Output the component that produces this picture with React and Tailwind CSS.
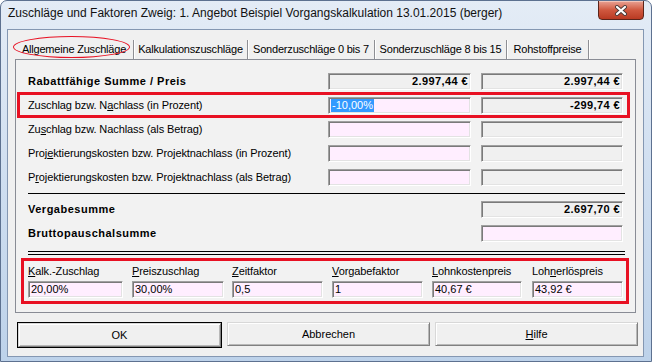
import clsx from "clsx";

const Field = ({ w, pink, value, bold, right, selected }) => (
  <div
    className={clsx(
      "h-[17px] shrink-0 border border-t-[#a0a0a0] border-l-[#a0a0a0] border-b-[#ffffff] border-r-[#ffffff] shadow-[inset_1px_1px_0_#7a7a7a,inset_-1px_-1px_0_#e3e3e3] flex items-center px-[2px] text-[11px] leading-[13px] text-black whitespace-nowrap",
      pink ? "bg-[#ffeeff]" : "bg-[#f0f0f0]",
      right ? "justify-end" : "justify-start",
      bold && "font-bold tracking-[0.4px]",
      w
    )}
  >
    {selected ? <span className="bg-[#3399ff] text-white px-px h-[13px]">{value}</span> : value}
  </div>
);

const U = ({ children }) => <span className="underline underline-offset-[1px]">{children}</span>;

const Row = ({ label, bold, a, b }) => (
  <div className="h-[24px] flex items-center">
    <div className={clsx("w-[300px] text-[11px] whitespace-nowrap", bold ? "font-bold tracking-[0.5px]" : "tracking-[-0.1px]")}>{label}</div>
    <div className="w-[143px]">{a}</div>
    <div className="w-[142px] ml-[10px]">{b}</div>
  </div>
);

const tabs = [
  { name: "Allgemeine Zuschläge", w: "w-[119px]", active: true },
  { name: "Kalkulationszuschläge", w: "w-[114px]" },
  { name: "Sonderzuschläge 0 bis 7", w: "w-[127px]" },
  { name: "Sonderzuschläge 8 bis 15", w: "w-[132px]" },
  { name: "Rohstoffpreise", w: "w-[82px]" },
];

const bottom = [
  { label: <><U>K</U>alk.-Zuschlag</>, value: "20,00%", w: "w-[95px]" },
  { label: <><U>P</U>reiszuschlag</>, value: "30,00%", w: "w-[92px]" },
  { label: <><U>Z</U>eitfaktor</>, value: "0,5", w: "w-[91px]" },
  { label: <><U>V</U>orgabefaktor</>, value: "1", w: "w-[91px]" },
  { label: <><U>L</U>ohnkostenpreis</>, value: "40,67 €", w: "w-[90px]" },
  { label: <>Loh<U>n</U>erlöspreis</>, value: "43,92 €", w: "w-[91px]" },
];

const btn =
  "w-[203px] h-[24px] bg-[#f0f0f0] border border-t-[#d8d8d8] border-l-[#d8d8d8] border-b-[#808080] border-r-[#808080] shadow-[inset_1px_1px_0_#ffffff,inset_-1px_-1px_0_#b8b8b8] text-[11px] text-black flex items-center justify-center";

export default function App() {
  return (
    <div className="w-[652px] h-[362px] relative overflow-hidden flex flex-col rounded-t-[7px] border border-[#5d7190] bg-gradient-to-b from-[#e4ecf6] via-[#cfdef0] to-[#bdd2ea] font-['Liberation_Sans',Arial,sans-serif] text-black select-none">
      {/* title bar */}
      <div className="h-[28px] shrink-0 relative">
        <div className="pl-[7px] pt-[5px] text-[12px] leading-[15px] whitespace-nowrap text-[#111]">
          Zuschläge und Faktoren Zweig: 1. Angebot Beispiel Vorgangskalkulation 13.01.2015 (berger)
        </div>
        <div className="absolute right-[7px] -top-px w-[46px] h-[20px] rounded-b-[4px] border border-[#5b241a] bg-gradient-to-b from-[#e8a294] via-[#d0583f] to-[#b93a22] shadow-[inset_0_1px_0_#f3c4b8] flex items-center justify-center">
          <svg width="14" height="11" viewBox="0 0 14 11">
            <path d="M3 2 L11 9 M11 2 L3 9" stroke="#4a3a38" strokeWidth="4" strokeLinecap="round" />
            <path d="M3 2 L11 9 M11 2 L3 9" stroke="#ffffff" strokeWidth="2.2" strokeLinecap="round" />
          </svg>
        </div>
      </div>

      {/* client area */}
      <div className="flex-1 ml-[6px] mr-[7px] mb-[4px] border border-[#8497b2] bg-[#f0f0f0] flex flex-col">
        {/* tab strip */}
        <div className="mt-[8px] ml-[7px] h-[21px] flex items-end">
          {tabs.map((t) => (
            <div
              key={t.name}
              className={clsx(
                "relative h-[19px] flex items-center justify-center text-[11px] tracking-[-0.2px] whitespace-nowrap border-r border-r-[#8e8f94] shadow-[1px_0_0_#ffffff]",
                t.w
              )}
            >
              {t.name}
              {t.active && (
                <div className="absolute -left-[2px] -top-[4px] w-[117px] h-[22px] rounded-[50%] border border-[#e81123]" />
              )}
            </div>
          ))}
        </div>

        {/* pane */}
        <div className="ml-[7px] mr-[7px] h-[254px] shrink-0 border border-[#898c95] bg-[#f2f2f2] pl-[12px] pr-[11px] pt-[9px] flex flex-col">
          <Row
            bold
            label="Rabattfähige Summe / Preis"
            a={<Field w="w-[143px]" value="2.997,44 €" bold right />}
            b={<Field w="w-[142px]" value="2.997,44 €" bold right />}
          />
          <div className="relative">
            <Row
              label={<>Zuschlag bzw. N<U>a</U>chlass (in Prozent)</>}
              a={<Field w="w-[143px]" pink value="-10,00%" selected />}
              b={<Field w="w-[142px]" value="-299,74 €" bold right />}
            />
            <div className="absolute -left-[11px] -right-[6px] -top-px -bottom-px border-[3px] border-[#e81123] pointer-events-none" />
          </div>
          <Row
            label={<>Zu<U>s</U>chlag bzw. Nachlass (als Betrag)</>}
            a={<Field w="w-[143px]" pink />}
            b={<Field w="w-[142px]" />}
          />
          <Row
            label={<>Proj<U>e</U>ktierungskosten bzw. Projektnachlass (in Prozent)</>}
            a={<Field w="w-[143px]" pink />}
            b={<Field w="w-[142px]" />}
          />
          <Row
            label={<>P<U>r</U>ojektierungskosten bzw. Projektnachlass (als Betrag)</>}
            a={<Field w="w-[143px]" pink />}
            b={<Field w="w-[142px]" />}
          />

          <div className="mt-[4px] h-px bg-black mr-[-1px]" />

          <div className="mt-[3px]">
            <Row bold label="Vergabesumme" a={null} b={<Field w="w-[142px]" value="2.697,70 €" bold right />} />
            <Row bold label="Bruttopauschalsumme" a={null} b={<Field w="w-[142px]" pink />} />
          </div>

          <div className="mt-[6px] h-px bg-black mr-[-1px]" />
          <div className="mt-[2px] h-px bg-black mr-[-1px]" />

          {/* bottom factors */}
          <div className="mt-[3px] -ml-[7px] -mr-[5px] border-[3px] border-[#e81123] pl-[4px] pt-[4px] pb-[3px] grid grid-cols-[104px_100px_100px_100px_100px_1fr]">
            {bottom.map((f, i) => (
              <div key={i} className="flex flex-col">
                <div className="h-[13px] leading-[13px] text-[11px] tracking-[-0.1px] whitespace-nowrap">{f.label}</div>
                <div className="mt-[3px]">
                  <Field w={f.w} pink value={f.value} />
                </div>
              </div>
            ))}
          </div>
        </div>

        {/* buttons */}
        <div className="mt-[9px] ml-[9px] flex gap-[5px]">
          <div className="border border-black">
            <div className={clsx(btn, "w-[201px] h-[22px]")}>OK</div>
          </div>
          <div className={btn}>Abbrechen</div>
          <div className={btn}>
            <span>
              <U>H</U>ilfe
            </span>
          </div>
        </div>
      </div>
    </div>
  );
}
